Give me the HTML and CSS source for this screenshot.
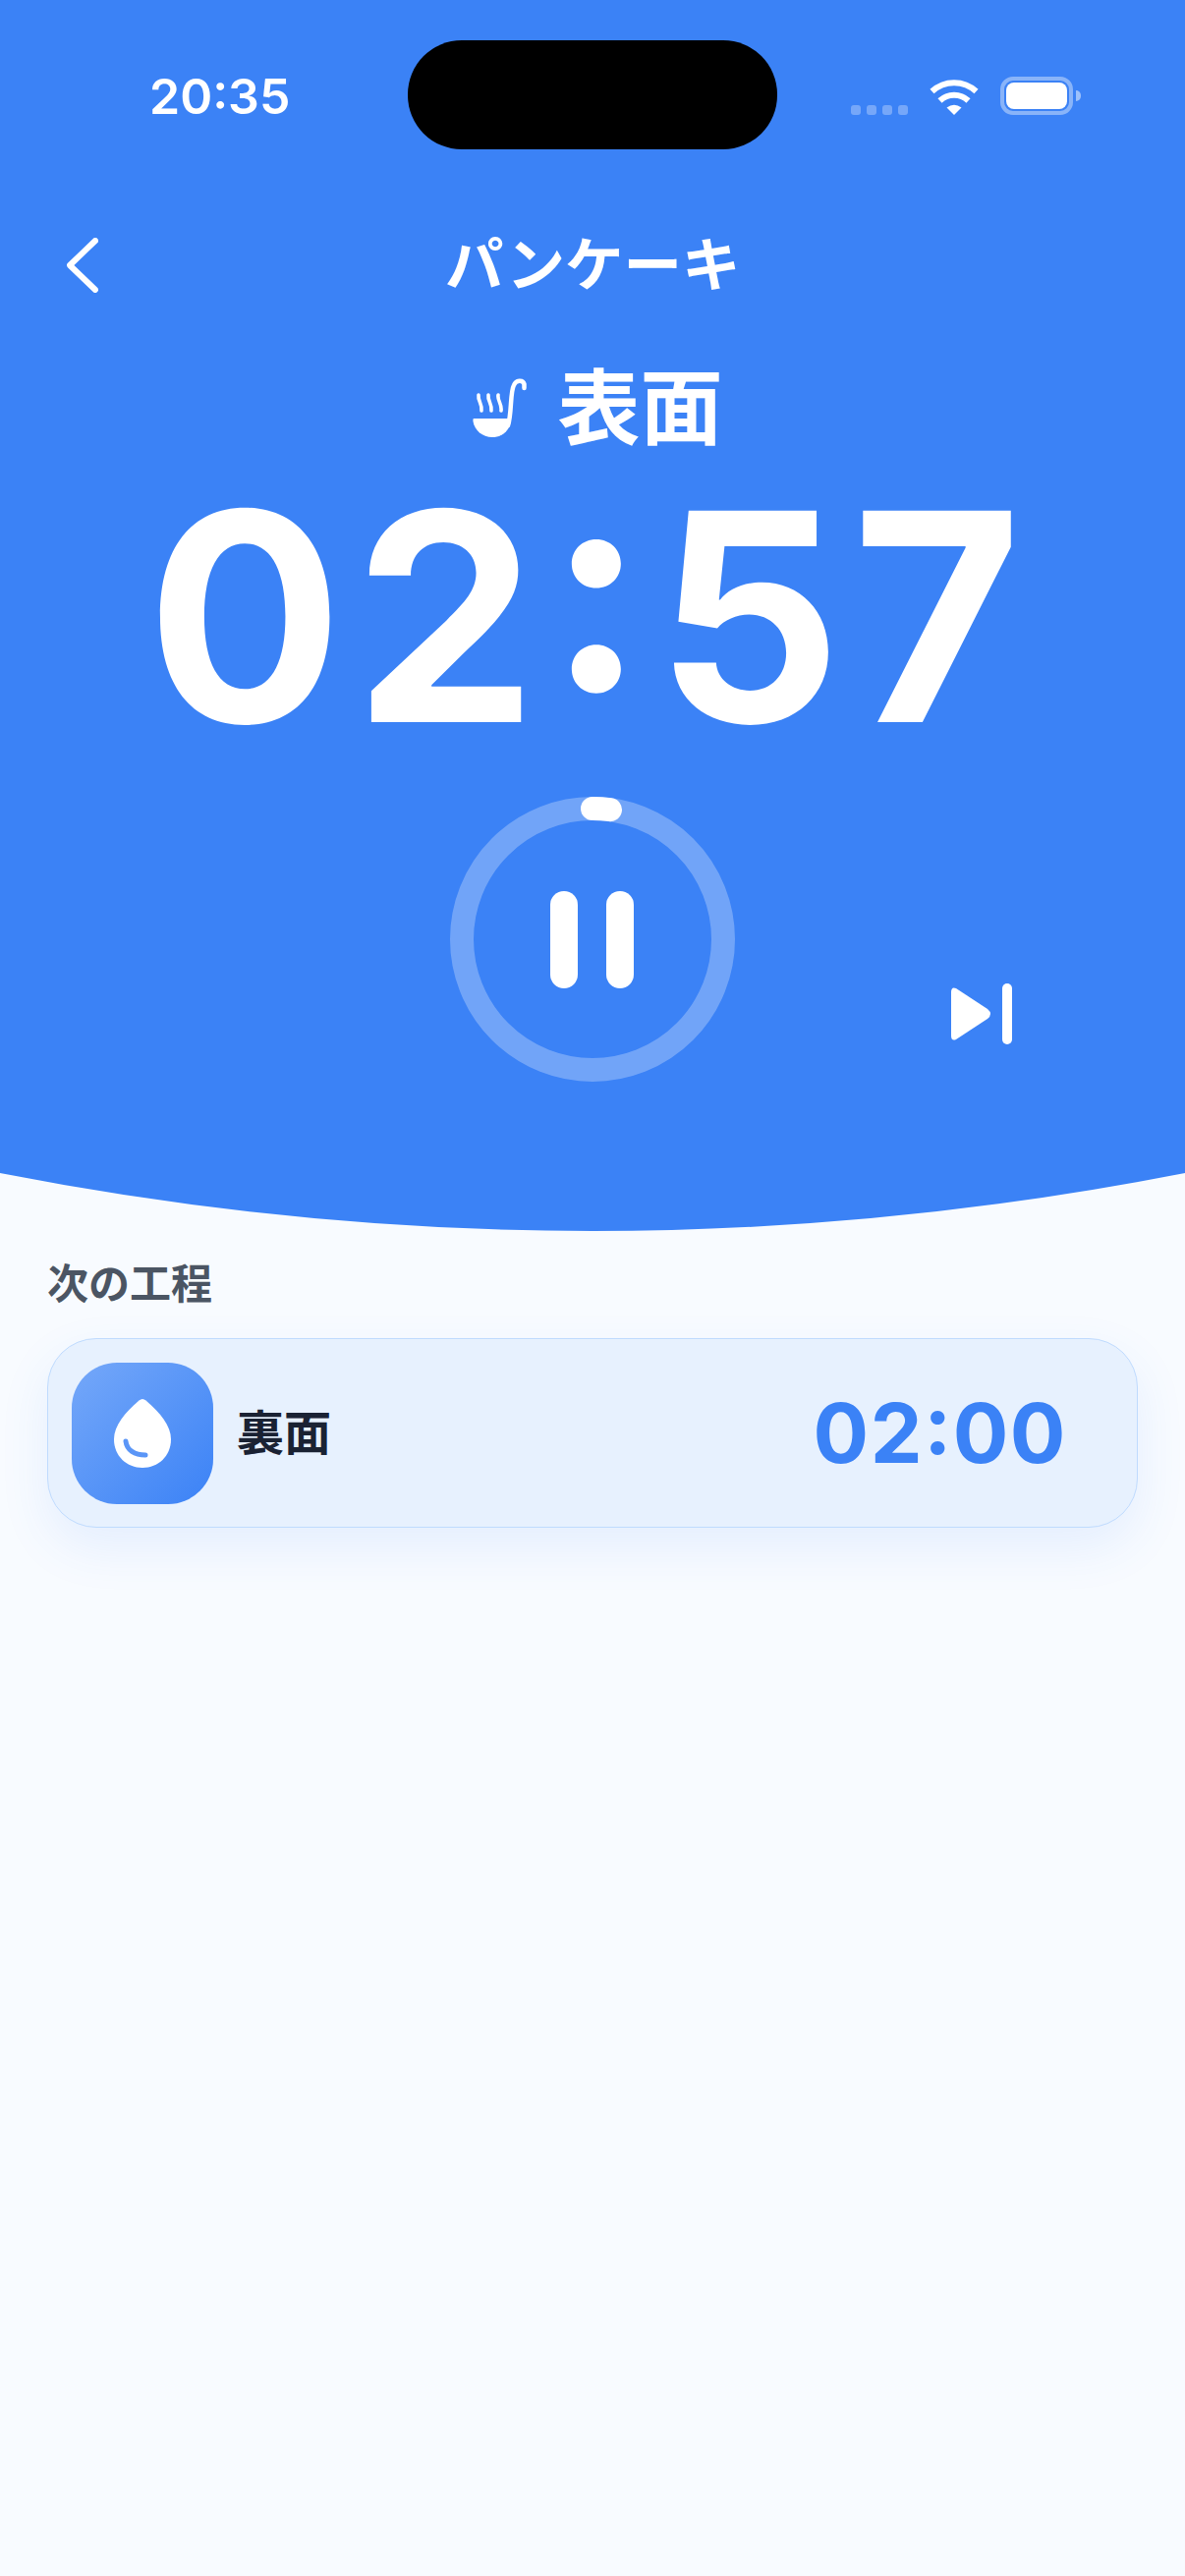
FILE: index.html
```html
<!DOCTYPE html>
<html lang="ja">
<head>
<meta charset="utf-8">
<title>パンケーキ</title>
<link rel="stylesheet" href="styles.css">
</head>
<body>
<main class="screen">
  <section class="hero">
    <div class="status">
      <span class="clock">20:35</span>
      <div class="island"></div>
      <div class="status-icons">
        <div class="signal"><i></i><i></i><i></i><i></i></div>
        <svg class="wifi" width="50" height="37" viewBox="0 0 50 37"><g fill="none" stroke="#fff" stroke-width="6"><path d="M2.5 13 A33 33 0 0 1 47.5 13"/><path d="M10.500 22.500 A21 21 0 0 1 39.500 22.500"/></g><path d="M25 37 L17.500 29.500 Q25 24 32.500 29.500 Z" fill="#fff"/></svg>
        <div class="battery"><div class="battery-fill"></div></div>
        <div class="battery-nub"></div>
      </div>
    </div>
    <header class="nav">
      <svg class="back" width="32" height="56" viewBox="0 0 32 56"><path d="M29 3 L3 28 L29 53" fill="none" stroke="#fff" stroke-width="6" stroke-linecap="round" stroke-linejoin="round"/></svg>
      <h1 class="title">パンケーキ</h1>
    </header>
    <div class="step">
      <svg class="ladle" width="58" height="62" viewBox="0 0 58 62">
        <path d="M3 41 H41 C41 53 32 60 22 60 C12 60 4 53 2.500 44 C2.300 42.500 2.500 41 3 41 Z" fill="#fff"/>
        <path d="M38 48 C42 36 40 14 44 7 C46 2 53 1 54.500 6 L54.500 10" fill="none" stroke="#fff" stroke-width="4.500" stroke-linecap="round"/>
        <g fill="none" stroke="#fff" stroke-width="3.600" stroke-linecap="round"><path d="M8 17 C7 23 12 26 11 33"/><path d="M18 17 C17 23 22 26 21 33"/><path d="M28 17 C27 23 32 26 31 33"/></g>
      </svg>
      <span class="step-name">表面</span>
    </div>
    <div class="timer">02:57</div>
    <div class="controls">
      <svg class="ring" width="290" height="290" viewBox="0 0 290 290">
        <circle cx="145" cy="145" r="133" fill="none" stroke="#fff" stroke-opacity=".28" stroke-width="24"/>
        <path d="M145 12 A133 133 0 0 1 163 13.200" fill="none" stroke="#fff" stroke-width="24" stroke-linecap="round"/>
        <rect x="102" y="96" width="28" height="99" rx="14" fill="#fff"/>
        <rect x="159" y="96" width="28" height="99" rx="14" fill="#fff"/>
      </svg>
      <svg class="skip" width="62" height="62" viewBox="0 0 62 62">
        <path d="M5 5 L37 26 Q43 31 37 36 L5 57 Q0 59 0 53 V9 Q0 3 5 5 Z" fill="#fff"/>
        <rect x="52" y="0" width="10" height="62" rx="5" fill="#fff"/>
      </svg>
    </div>
  </section>
  <svg class="curve" width="1206" height="60" viewBox="0 0 1206 60"><path d="M0 0 H1206 Q603 118 0 0 Z" fill="#3b82f6"/></svg>
  <section class="next">
    <h2 class="next-label">次の工程</h2>
    <article class="card">
      <div class="card-icon">
        <svg width="144" height="144" viewBox="0 0 144 144">
          <path d="M68.500 38.500 Q72 35.500 75.500 38.500 C90 51 101 64 101 78 C101 95 88 107 72 107 C56 107 43 95 43 78 C43 64 54 51 68.500 38.500 Z" fill="#fff"/>
          <path d="M55 80 C56 89 64 94 75 94" fill="none" stroke="#5b96f7" stroke-width="5" stroke-linecap="round"/>
        </svg>
      </div>
      <span class="card-name">裏面</span>
      <span class="card-time">02:00</span>
    </article>
  </section>
</main>
</body>
</html>
```
FILE: styles.css
```css
* { box-sizing: border-box; }
html, body { margin: 0; padding: 0; }
body {
  background: #f8fbff;
  font-family: Inter, "Noto Sans CJK JP", sans-serif;
}
.screen { width: 1206px; height: 2622px; overflow: hidden; background: #f8fbff; }
.hero { height: 1194px; background: #3b82f6; color: #fff; display: flex; flex-direction: column; }
.curve { display: block; }

.status {
  position: relative;
  height: 152px;
  padding: 41px 106px 0 152px;
  display: flex;
  justify-content: space-between;
  align-items: flex-start;
}
.clock { font-size: 50px; font-weight: 560; line-height: 114px; height: 111px; }
.island {
  position: absolute;
  left: 415px;
  top: 41px;
  width: 376px;
  height: 111px;
  border-radius: 55px;
  background: #000;
}
.status-icons { display: flex; align-items: flex-end; margin-top: 37px; height: 39px; }
.signal { display: flex; gap: 6px; margin-right: 22px; }
.signal i { width: 10px; height: 10px; border-radius: 3px; background: rgba(255, 255, 255, .3); }
.wifi { display: block; margin-right: 22px; }
.battery {
  width: 74px;
  height: 39px;
  border: 4px solid rgba(255, 255, 255, .4);
  border-radius: 13px;
  padding: 2px;
}
.battery-fill { width: 100%; height: 100%; background: #fff; border-radius: 8px; }
.battery-nub {
  width: 5px;
  height: 11px;
  margin: 0 0 14px 3px;
  border-radius: 0 6px 6px 0;
  background: rgba(255, 255, 255, .5);
}

.nav {
  height: 120px;
  margin-top: 58px;
  padding-left: 68px;
  display: grid;
  grid-template-columns: 385px auto 1fr;
  grid-template-areas: "back title .";
  align-items: center;
}
.back { grid-area: back; display: block; }
.title { grid-area: title; margin: 0; font-size: 59.500px; font-weight: 600; line-height: 1; white-space: nowrap; }

.step { display: flex; align-items: center; justify-content: center; gap: 30px; height: 96px; margin-top: 38px; padding-left: 9px; }
.ladle { display: block; margin-top: -1px; }
.step-name { font-size: 84px; font-weight: 600; line-height: 96px; }

.timer {
  height: 240px;
  margin-top: 43px;
  padding-right: 6px;
  text-align: center;
  font-size: 296px;
  font-weight: 720;
  font-feature-settings: "case" 1;
  letter-spacing: 11px;
  line-height: 240px;
  white-space: nowrap;
}

.controls {
  margin-top: 64px;
  display: grid;
  grid-template-columns: 1fr 290px 1fr;
  align-items: end;
  height: 290px;
}
.ring { grid-column: 2; display: block; }
.skip { grid-column: 3; justify-self: end; display: block; margin: 0 176px 38px 0; }

.next { padding: 0 48px; margin-top: 25px; }
.next-label { margin: 0; font-size: 42px; font-weight: 600; line-height: 56px; color: #4b5563; }
.card {
  margin-top: 27px;
  height: 193px;
  display: flex;
  align-items: center;
  padding: 0 71px 0 24px;
  background: #e7f1fe;
  border: 1.500px solid #bfdbfe;
  border-radius: 50px;
  box-shadow: 0 20px 50px rgba(59, 130, 246, .1);
}
.card-icon {
  width: 144px;
  height: 144px;
  flex: none;
  border-radius: 46px;
  background: linear-gradient(135deg, #75a8f9, #3b82f6);
}
.card-icon svg { display: block; }
.card-name { margin-left: 24px; font-size: 48px; font-weight: 700; color: #1a2233; line-height: 1; }
.card-time { margin-left: auto; font-size: 84px; font-weight: 720; font-feature-settings: "case" 1; letter-spacing: 1.500px; color: #3b82f6; line-height: 1; }
```
